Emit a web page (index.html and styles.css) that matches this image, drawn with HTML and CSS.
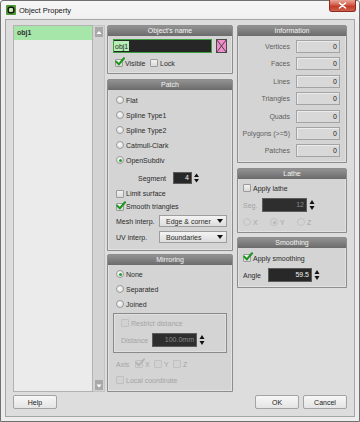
FILE: index.html
```html
<!DOCTYPE html>
<html>
<head>
<meta charset="utf-8">
<title>Object Property</title>
<link rel="stylesheet" href="styles.css">
</head>
<body>
<div class="window">
  <div class="titlebar">
    <svg class="app-icon" viewBox="0 0 10 10" width="10" height="10">
      <rect x="0" y="0" width="10" height="10" rx="1" fill="#4f9a35"/>
      <rect x="2.2" y="2.2" width="5.6" height="5.6" rx="2" fill="#cfe8b8" stroke="#151515" stroke-width="1.5"/>
    </svg>
    <span class="title">Object Property</span>
    <div class="close-btn">
      <svg viewBox="0 0 9 7" width="9" height="7"><path d="M1.5 1 L7.5 6 M7.5 1 L1.5 6" stroke="#fff" stroke-width="1.6" stroke-linecap="round"/></svg>
    </div>
  </div>

  <div class="client">
    <div class="main">
      <div class="list-col">
        <div class="list">
          <div class="list-item sel">obj1</div>
        </div>
        <div class="vscroll">
          <div class="sbtn"><svg viewBox="0 0 8 9" width="8" height="9"><path d="M1.5 6 L4 3 L6.5 6 Z" fill="#fff"/></svg></div>
          <div class="strack"></div>
          <div class="sbtn"><svg viewBox="0 0 8 9" width="8" height="9"><path d="M1.5 3.5 L4 6.5 L6.5 3.5 Z" fill="#fff"/></svg></div>
        </div>
      </div>

      <div class="mid-col">
        <section class="panel p-name">
          <div class="phead">Object's name</div>
          <div class="pbody name-body">
            <div class="name-row">
              <div class="name-input"><span class="sel-text">obj1</span></div>
              <div class="clear-btn">
                <svg viewBox="0 0 11 14" width="11" height="14"><path d="M0.5 0.5 L10.5 13.5 M10.5 0.5 L0.5 13.5" stroke="#3a3a3a" stroke-width="0.9"/></svg>
              </div>
            </div>
            <div class="row vis-row">
              <label class="opt vis-opt"><span class="cb"><svg class="chk" viewBox="0 0 10 9" width="10" height="9"><path d="M1.2 4.6 L3.8 7.4 L9 1.3" fill="none" stroke="#1c951c" stroke-width="2.1" stroke-linecap="round" stroke-linejoin="round"/></svg></span>Visible</label>
              <label class="opt"><span class="cb"></span>Lock</label>
            </div>
          </div>
        </section>

        <section class="panel p-patch">
          <div class="phead">Patch</div>
          <div class="pbody patch-body">
            <div class="radio-list">
              <label class="opt row"><span class="rb"></span>Flat</label>
              <label class="opt row"><span class="rb"></span>Spline Type1</label>
              <label class="opt row"><span class="rb"></span>Spline Type2</label>
              <label class="opt row"><span class="rb"></span>Catmull-Clark</label>
              <label class="opt row"><span class="rb on"></span>OpenSubdiv</label>
            </div>
            <div class="row seg-row">
              <span class="seg-label">Segment</span>
              <div class="spin">
                <div class="spin-field seg-field">4</div>
                <svg class="spin-arrows" viewBox="0 0 7 12" width="7" height="12"><path d="M1 5 L3.5 1.5 L6 5 Z M1 7 L6 7 L3.5 10.5 Z" fill="#111"/></svg>
              </div>
            </div>
            <label class="opt row cbrow limit-row"><span class="cb"></span>Limit surface</label>
            <label class="opt row cbrow smooth-row"><span class="cb"><svg class="chk" viewBox="0 0 10 9" width="10" height="9"><path d="M1.2 4.6 L3.8 7.4 L9 1.3" fill="none" stroke="#1c951c" stroke-width="2.1" stroke-linecap="round" stroke-linejoin="round"/></svg></span>Smooth triangles</label>
            <div class="row combo-row mesh-row">
              <span class="combo-label">Mesh interp.</span>
              <div class="combo"><span>Edge &amp; corner</span><svg viewBox="0 0 6 4" width="6" height="4"><path d="M0 0 L6 0 L3 4 Z" fill="#111"/></svg></div>
            </div>
            <div class="row combo-row uv-row">
              <span class="combo-label">UV interp.</span>
              <div class="combo"><span>Boundaries</span><svg viewBox="0 0 6 4" width="6" height="4"><path d="M0 0 L6 0 L3 4 Z" fill="#111"/></svg></div>
            </div>
          </div>
        </section>

        <section class="panel p-mirror">
          <div class="phead">Mirroring</div>
          <div class="pbody mirror-body">
            <div class="radio-list">
              <label class="opt row"><span class="rb on"></span>None</label>
              <label class="opt row"><span class="rb"></span>Separated</label>
              <label class="opt row"><span class="rb"></span>Joined</label>
            </div>
            <div class="group">
              <label class="opt row dis"><span class="cb"></span>Restrict distance</label>
              <div class="row dist-row dis">
                <span class="dist-label">Distance</span>
                <div class="spin">
                  <div class="spin-field off dist-field">100.0mm</div>
                  <svg class="spin-arrows" viewBox="0 0 8 14" width="8" height="14"><path d="M1.5 6 L4 2 L6.5 6 Z M1.5 8 L6.5 8 L4 12 Z" fill="#111"/></svg>
                </div>
              </div>
            </div>
            <div class="row axis-row dis">
              <span class="axis-label">Axis</span>
              <label class="opt axis-item"><span class="cb"><svg class="chk" viewBox="0 0 10 9" width="10" height="9"><path d="M1.2 4.6 L3.8 7.4 L9 1.3" fill="none" stroke="#b4b4b4" stroke-width="1.8" stroke-linecap="round" stroke-linejoin="round"/></svg></span>X</label>
              <label class="opt axis-item"><span class="cb"></span>Y</label>
              <label class="opt axis-item"><span class="cb"></span>Z</label>
            </div>
            <label class="opt row local-row dis"><span class="cb"></span>Local coordinate</label>
          </div>
        </section>
      </div>

      <div class="right-col">
        <section class="panel p-info">
          <div class="phead">Information</div>
          <div class="pbody info-body">
            <div class="info-row"><span class="info-label">Vertices</span><span class="info-field">0</span></div>
            <div class="info-row"><span class="info-label">Faces</span><span class="info-field">0</span></div>
            <div class="info-row"><span class="info-label">Lines</span><span class="info-field">0</span></div>
            <div class="info-row"><span class="info-label">Triangles</span><span class="info-field">0</span></div>
            <div class="info-row"><span class="info-label">Quads</span><span class="info-field">0</span></div>
            <div class="info-row"><span class="info-label">Polygons (&gt;=5)</span><span class="info-field">0</span></div>
            <div class="info-row"><span class="info-label">Patches</span><span class="info-field">0</span></div>
          </div>
        </section>

        <section class="panel p-lathe">
          <div class="phead">Lathe</div>
          <div class="pbody lathe-body">
            <label class="opt row"><span class="cb"></span>Apply lathe</label>
            <div class="row spin-row dis">
              <span class="seg2-label">Seg.</span>
              <div class="spin">
                <div class="spin-field off lathe-field">12</div>
                <svg class="spin-arrows" viewBox="0 0 8 14" width="8" height="14"><path d="M1.5 6 L4 2 L6.5 6 Z M1.5 8 L6.5 8 L4 12 Z" fill="#111"/></svg>
              </div>
            </div>
            <div class="row xyz-row dis">
              <label class="opt xyz-item"><span class="rb"></span>X</label>
              <label class="opt xyz-item"><span class="rb on"></span>Y</label>
              <label class="opt xyz-item"><span class="rb"></span>Z</label>
            </div>
          </div>
        </section>

        <section class="panel p-smooth">
          <div class="phead">Smoothing</div>
          <div class="pbody smooth-body">
            <label class="opt row"><span class="cb"><svg class="chk" viewBox="0 0 10 9" width="10" height="9"><path d="M1.2 4.6 L3.8 7.4 L9 1.3" fill="none" stroke="#1c951c" stroke-width="2.1" stroke-linecap="round" stroke-linejoin="round"/></svg></span>Apply smoothing</label>
            <div class="row spin-row">
              <span class="angle-label">Angle</span>
              <div class="spin">
                <div class="spin-field angle-field">59.5</div>
                <svg class="spin-arrows" viewBox="0 0 8 14" width="8" height="14"><path d="M1.5 6 L4 2 L6.5 6 Z M1.5 8 L6.5 8 L4 12 Z" fill="#111"/></svg>
              </div>
            </div>
          </div>
        </section>
      </div>
    </div>

    <div class="footer">
      <button class="btn">Help</button>
      <span class="spacer"></span>
      <button class="btn">OK</button>
      <button class="btn">Cancel</button>
    </div>
  </div>
</div>
</body>
</html>
```

FILE: styles.css
```css
* { box-sizing: border-box; margin: 0; padding: 0; }
html, body { width: 360px; height: 422px; overflow: hidden; }
body {
  font-family: "Liberation Sans", Arial, sans-serif;
  font-size: 7px;
  color: #2b2b2b;
  background: #ffffff;
}

.window {
  width: 360px;
  height: 422px;
  border: 1px solid #707070;
  border-radius: 3px 3px 0 0;
  background: linear-gradient(#f7f7f7, #ededed 24px, #ececec);
  display: flex;
  flex-direction: column;
}

.titlebar {
  height: 18px;
  display: flex;
  align-items: center;
  padding-left: 5px;
}
.app-icon { width: 10px; height: 10px; margin-right: 3px; flex: none; }
.title { font-size: 7.5px; color: #151515; }
.close-btn {
  margin-left: auto;
  align-self: flex-start;
  margin-top: -1px;
  margin-right: 3px;
  width: 27px;
  height: 12px;
  border: 1px solid #8e2b21;
  border-top: none;
  border-radius: 0 0 3px 3px;
  background: linear-gradient(#e8a596, #d35d49 45%, #c23b28 55%, #d0614d);
  display: flex;
  align-items: center;
  justify-content: center;
}

.client {
  flex: 1;
  margin: 0 4px 4px 4px;
  border: 1px solid #a6a6a6;
  background: #dddddd;
  display: flex;
  flex-direction: column;
}

.main {
  display: flex;
  height: 372px;
  padding: 5px 7px 0 7px;
}

/* object list */
.list-col { width: 92px; display: flex; flex: none; }
.list {
  width: 80px;
  border: 1px solid #b2b2b2;
  background: #ebebeb;
}
.list-item {
  height: 14px;
  line-height: 14px;
  padding-left: 3px;
  font-weight: bold;
  color: #333;
}
.list-item.sel { background: #a6e6a8; }
.vscroll {
  width: 12px;
  background: #d3d3d3;
  border: 1px solid #c4c4c4;
  border-left: none;
  display: flex;
  flex-direction: column;
  align-items: center;
  padding: 1px 0;
}
.sbtn {
  width: 8px;
  height: 10px;
  background: #a9a9a9;
  display: flex;
  align-items: center;
  justify-content: center;
}
.strack { flex: 1; }

.mid-col {
  width: 126px;
  margin-left: 2px;
  display: flex;
  flex-direction: column;
  flex: none;
}
.right-col {
  width: 110px;
  margin-left: 4px;
  display: flex;
  flex-direction: column;
  flex: none;
}

/* panels */
.panel {
  border: 1px solid #8d8d8d;
  border-radius: 2px 2px 0 0;
  background: #d4d4d4;
  box-shadow: inset 0 0 0 1px #e2e2e2;
  display: flex;
  flex-direction: column;
  flex: none;
}
.phead {
  height: 10px;
  line-height: 10px;
  text-align: center;
  color: #f4f4f4;
  background: linear-gradient(#929292, #6b6b6b);
  flex: none;
}
.pbody { display: flex; flex-direction: column; }

.p-name { height: 49px; }
.p-patch { height: 172px; margin-top: 5px; }
.p-mirror { height: 138px; margin-top: 3px; }
.p-info { height: 138px; }
.p-lathe { height: 65px; margin-top: 5px; }
.p-smooth { height: 51px; margin-top: 4px; }

.row { display: flex; align-items: center; height: 12px; flex: none; }
.opt { display: flex; align-items: center; gap: 2px; }

/* checkbox & radio */
.cb {
  width: 8px;
  height: 8px;
  flex: none;
  position: relative;
  border: 1px solid #9b9b9b;
  border-radius: 1px;
  background: linear-gradient(#f2f2f2, #dadada);
}
.chk { position: absolute; left: -1px; top: -3px; }
.rb {
  width: 8px;
  height: 8px;
  flex: none;
  border: 1px solid #9a9a9a;
  border-radius: 50%;
  background: radial-gradient(circle at 40% 35%, #fbfbfb, #d6d6d6);
  display: flex;
  align-items: center;
  justify-content: center;
}
.rb.on::after {
  content: "";
  width: 3px;
  height: 3px;
  border-radius: 50%;
  background: #25a02a;
}
.dis { color: #a4a4a4; }
.dis .cb { border-color: #c0c0c0; background: #d2d2d2; }
.dis .rb { border-color: #c2c2c2; background: #d4d4d4; }
.dis .rb.on::after { background: #b8b8b8; }

/* object's name */
.name-body { padding: 3px 5px 0 5px; }
.name-row { display: flex; gap: 4px; height: 14px; }
.name-input {
  width: 99px;
  height: 14px;
  background: #262626;
  border: 1px solid #3c9e3c;
  padding: 1px 0;
  display: flex;
}
.sel-text {
  background: #b6efb6;
  color: #222;
  padding: 0 1px;
  line-height: 12px;
  width: 15px;
}
.clear-btn {
  width: 11px;
  height: 14px;
  background: #f18cc9;
  border: 1px solid #4a4a4a;
  overflow: hidden;
  display: flex;
}
.clear-btn svg { margin: -1px; }
.vis-row { margin-top: 5px; height: 10px; padding-left: 2px; }
.vis-opt { width: 35px; }

/* patch */
.patch-body { padding: 4px 5px 0 8px; }
.radio-list { display: flex; flex-direction: column; gap: 3px; }
.seg-row { margin-top: 6px; }
.seg-label { width: 50px; text-align: right; margin-right: 7px; }
.spin { display: flex; align-items: center; gap: 1px; }
.spin-field {
  height: 12px;
  line-height: 10px;
  background: #282828;
  border: 1px solid #5c5c5c;
  color: #f2f2f2;
  text-align: right;
  padding-right: 2px;
}
.spin-field.off { color: #8a8a8a; background: #2e2e2e; }
.seg-field { width: 19px; }
.spin-arrows { flex: none; }
.cbrow { height: 11px; }
.limit-row { margin-top: 4px; }
.smooth-row { margin-top: 2px; }
.combo-row { height: 12px; }
.mesh-row { margin-top: 3px; }
.uv-row { margin-top: 4px; }
.combo-label { width: 43px; }
.combo {
  width: 68px;
  height: 12px;
  border: 1px solid #9d9d9d;
  background: linear-gradient(#f3f3f3, #dddddd);
  display: flex;
  align-items: center;
  justify-content: space-between;
  padding: 0 3px 0 6px;
  color: #2b2b2b;
}

/* mirroring */
.mirror-body { padding: 3px 5px 0 8px; }
.group {
  margin-top: 3px;
  margin-left: -3px;
  height: 40px;
  border: 1px solid #8a8a8a;
  box-shadow: inset 0 0 0 1px #e0e0e0;
  padding: 3px 0 0 7px;
  display: flex;
  flex-direction: column;
}
.dist-row { margin-top: 4px; height: 14px; }
.dist-label { width: 31px; }
.dist-field { width: 45px; height: 14px; line-height: 12px; }
.axis-row { margin-top: 5px; }
.axis-label { width: 19px; }
.axis-item { width: 19px; }
.local-row { margin-top: 4px; }

/* information */
.info-body { padding-top: 4px; gap: 4.4px; }
.info-row { display: flex; align-items: center; height: 13px; }
.info-label { width: 52px; text-align: right; color: #5e5e5e; }
.info-field {
  margin-left: 6px;
  width: 44px;
  height: 13px;
  line-height: 11px;
  border: 1px solid #a3a3a3;
  box-shadow: inset 1px 1px 0 #ececec;
  background: #d8d8d8;
  text-align: right;
  padding-right: 2px;
  color: #222;
}

/* lathe */
.lathe-body { padding: 3px 0 0 5px; }
.spin-row { margin-top: 4px; height: 14px; }
.seg2-label { width: 19px; }
.lathe-field { width: 45px; height: 14px; line-height: 12px; }
.xyz-row { margin-top: 4px; }
.xyz-item { width: 27px; }

/* smoothing */
.smooth-body { padding: 4px 0 0 5px; }
.angle-label { width: 25px; }
.angle-field { width: 44px; height: 14px; line-height: 12px; }

/* footer */
.footer {
  display: flex;
  gap: 4px;
  padding: 3px 7px 0 7px;
}
.spacer { flex: 1; }
.btn {
  width: 44px;
  height: 14px;
  border: 1px solid #a3a3a3;
  border-radius: 2px;
  background: linear-gradient(#f7f7f7, #e4e4e4);
  font-family: "Liberation Sans", Arial, sans-serif;
  font-size: 7px;
  color: #222;
}
```
